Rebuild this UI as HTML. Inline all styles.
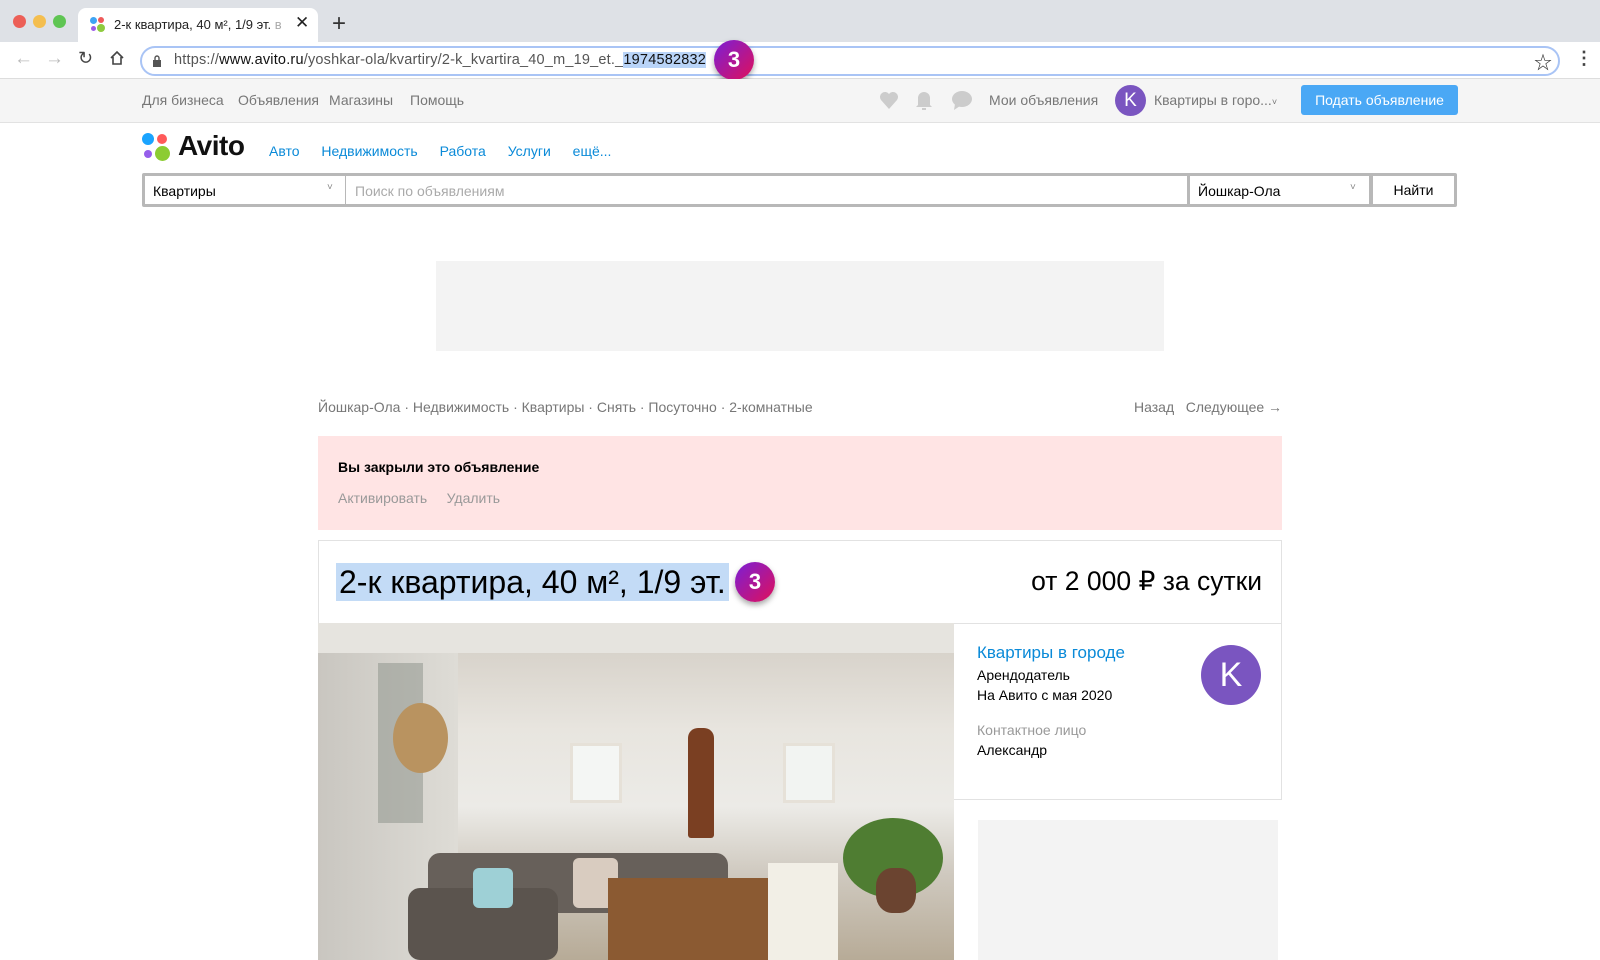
<!DOCTYPE html>
<html><head><meta charset="utf-8"><style>
*{box-sizing:border-box;margin:0;padding:0}
body{width:1600px;height:960px;overflow:hidden;background:#fff;font-family:"Liberation Sans","Noto Sans CJK SC",sans-serif;position:relative;color:#000}
.a{position:absolute}
.dot{position:absolute;border-radius:50%}
.badge{position:absolute;width:40px;height:40px;border-radius:50%;background:linear-gradient(135deg,#7a1fd6,#e0105a);color:#fff;font-weight:bold;font-size:22px;text-align:center;line-height:40px;box-shadow:0 3px 6px rgba(0,0,0,.35)}
.gr{color:#777}
</style></head><body>
<div class="a" style="left:0;top:0;width:1600px;height:42px;background:#dee1e6"></div>
<div class="dot" style="left:13px;top:15px;width:13px;height:13px;background:#ec5f57"></div>
<div class="dot" style="left:33px;top:15px;width:13px;height:13px;background:#f4be4f"></div>
<div class="dot" style="left:53px;top:15px;width:13px;height:13px;background:#5fc553"></div>
<div class="a" style="left:78px;top:8px;width:240px;height:36px;background:#fff;border-radius:8px 8px 0 0"></div>
<div class="dot" style="left:90px;top:17px;width:7px;height:7px;background:#3ea4f4"></div>
<div class="dot" style="left:98px;top:17px;width:6px;height:6px;background:#ef5a5a"></div>
<div class="dot" style="left:91px;top:26px;width:5px;height:5px;background:#9b5ce8"></div>
<div class="dot" style="left:97px;top:24px;width:8px;height:8px;background:#8ecb3e"></div>
<div class="a" style="left:114px;top:17px;font-size:13px;color:#222;white-space:nowrap">2-к квартира, 40 м², 1/9 эт. <span style="color:#aaa">в</span></div>
<div class="a" style="left:295px;top:13px;font-size:17px;color:#222">✕</div>
<div class="a" style="left:332px;top:10px;font-size:24px;color:#333">+</div>
<div class="a" style="left:0;top:42px;width:1600px;height:37px;background:#fff;border-bottom:1px solid #ddd"></div>
<div class="a" style="left:14px;top:48px;font-size:19px;color:#bbb">←</div>
<div class="a" style="left:45px;top:48px;font-size:19px;color:#bbb">→</div>
<div class="a" style="left:78px;top:48px;font-size:18px;color:#444">↻</div>
<svg class="a" style="left:110px;top:51px" width="14" height="14" viewBox="0 0 14 14"><path d="M1 7 L7 1 L13 7 M3 6 V13 H11 V6" fill="none" stroke="#444" stroke-width="1.6"/></svg>
<div class="a" style="left:140px;top:46px;width:1420px;height:30px;border:2px solid #a9c4f5;border-radius:15px"></div>
<svg class="a" style="left:152px;top:55px" width="10" height="12" viewBox="0 0 10 12"><rect x="1" y="5" width="8" height="7" fill="#555"/><path d="M3 5V3a2 2 0 0 1 4 0v2" fill="none" stroke="#555" stroke-width="1.4"/></svg>
<div class="a" style="left:174px;top:52px;font-size:14.5px;color:#555;white-space:nowrap;letter-spacing:0.2px">https://<span style="color:#111">www.avito.ru</span>/yoshkar-ola/kvartiry/2-k_kvartira_40_m_19_et._<span style="background:#b9d4f8;color:#111">1974582832</span></div>
<div class="badge" style="left:714px;top:40px">3</div>
<div class="a" style="left:1534px;top:49px;font-size:18px;color:#333">☆</div>
<div class="a" style="left:1575px;top:48px;font-size:18px;color:#444;font-weight:bold">⋮</div>
<div class="a" style="left:0;top:79px;width:1600px;height:44px;background:#f5f5f5;border-bottom:1px solid #e2e2e2"></div>
<div class="a gr" style="left:142px;top:92px;font-size:14px;white-space:nowrap">Для бизнеса</div>
<div class="a gr" style="left:238px;top:92px;font-size:14px;white-space:nowrap">Объявления</div>
<div class="a gr" style="left:329px;top:92px;font-size:14px;white-space:nowrap">Магазины</div>
<div class="a gr" style="left:410px;top:92px;font-size:14px;white-space:nowrap">Помощь</div>
<svg class="a" style="left:879px;top:91px" width="20" height="18" viewBox="0 0 20 18"><path d="M10 18 L2 9 A5 5 0 0 1 10 3 A5 5 0 0 1 18 9Z" fill="#ccc"/></svg>
<svg class="a" style="left:915px;top:89px" width="18" height="22" viewBox="0 0 18 22"><path d="M3 16 V9 A6 6 0 0 1 15 9 V16 L17 18 H1Z M7 19 H11 V21 H7Z" fill="#ccc"/></svg>
<svg class="a" style="left:951px;top:90px" width="22" height="20" viewBox="0 0 22 20"><ellipse cx="11" cy="9" rx="10" ry="8" fill="#ccc"/><path d="M4 14 L3 20 L9 16Z" fill="#ccc"/></svg>
<div class="a gr" style="left:989px;top:92px;font-size:14px">Мои объявления</div>
<div class="dot" style="left:1115px;top:85px;width:31px;height:31px;background:#7a55c0;color:#fff;font-size:19px;text-align:center;line-height:31px">K</div>
<div class="a gr" style="left:1154px;top:92px;font-size:14px;white-space:nowrap">Квартиры в горо...<span style="font-size:9px">˅</span></div>
<div class="a" style="left:1301px;top:85px;width:157px;height:30px;background:#4aa8f5;border-radius:3px;color:#fff;font-size:14px;text-align:center;line-height:30px">Подать объявление</div>
<div class="dot" style="left:142px;top:133px;width:12px;height:12px;background:#1aa4ff"></div>
<div class="dot" style="left:157px;top:134px;width:10px;height:10px;background:#ff5a5a"></div>
<div class="dot" style="left:144px;top:150px;width:8px;height:8px;background:#965eeb"></div>
<div class="dot" style="left:155px;top:146px;width:15px;height:15px;background:#8ccc32"></div>
<div class="a" style="left:178px;top:130px;font-size:28px;font-weight:bold;color:#111;letter-spacing:-0.5px">Avito</div>
<div class="a" style="left:269px;top:143px;font-size:14px;color:#0a8ad8;word-spacing:18px;white-space:nowrap">Авто <span style="word-spacing:0">Недвижимость</span> Работа Услуги ещё...</div>
<div class="a" style="left:142px;top:173px;width:1315px;height:34px;background:#b8b8b8;border-radius:2px"></div>
<div class="a" style="left:145px;top:176px;width:200px;height:28px;background:#fff;font-size:14px;padding:7px 8px">Квартиры<span class="a" style="left:182px;top:6px;font-size:10px;color:#888">˅</span></div>
<div class="a" style="left:346px;top:176px;width:841px;height:28px;background:#fff;font-size:14px;padding:7px 9px;color:#aaa">Поиск по объявлениям</div>
<div class="a" style="left:1190px;top:176px;width:179px;height:28px;background:#fff;font-size:14px;padding:7px 8px">Йошкар-Ола<span class="a" style="left:160px;top:6px;font-size:10px;color:#888">˅</span></div>
<div class="a" style="left:1373px;top:176px;width:81px;height:28px;background:#fff;font-size:14px;text-align:center;line-height:28px">Найти</div>
<div class="a" style="left:436px;top:261px;width:728px;height:90px;background:#f3f3f3"></div>
<div class="a gr" style="left:318px;top:399px;font-size:14px;white-space:nowrap">Йошкар-Ола · Недвижимость · Квартиры · Снять · Посуточно · 2-комнатные</div>
<div class="a gr" style="left:1134px;top:399px;font-size:14px;white-space:nowrap">Назад&nbsp;&nbsp; Следующее →</div>
<div class="a" style="left:318px;top:436px;width:964px;height:94px;background:#ffe4e4"></div>
<div class="a" style="left:338px;top:459px;font-size:14px;font-weight:bold">Вы закрыли это объявление</div>
<div class="a" style="left:338px;top:490px;font-size:14px;color:#999">Активировать&nbsp;&nbsp;&nbsp;&nbsp; Удалить</div>
<div class="a" style="left:318px;top:540px;width:964px;height:84px;border:1px solid #e2e2e2"></div>
<div class="a" style="left:336px;top:563px;height:38px;background:#c3dbf6;font-size:32px;line-height:38px;padding:0 3px;white-space:nowrap">2-к квартира, 40 м², 1/9 эт.</div>
<div class="badge" style="left:735px;top:562px">3</div>
<div class="a" style="left:1030px;top:566px;width:232px;text-align:right;font-size:26.5px;white-space:nowrap">от 2 000 ₽ за сутки</div>
<div class="a" style="left:318px;top:623px;width:636px;height:337px;overflow:hidden;background:#e8e6e2">
 <div class="a" style="left:0;top:0;width:636px;height:30px;background:#e6e4df"></div>
 <div class="a" style="left:0;top:30px;width:636px;height:307px;background:linear-gradient(180deg,#d8d3cb 0%,#e8e5df 25%,#ecebe7 50%,#cfc9bf 72%,#b7ab97 100%)"></div>
 <div class="a" style="left:0;top:30px;width:140px;height:307px;background:linear-gradient(90deg,#c9c6c0,#dedcd6)"></div>
 <div class="a" style="left:60px;top:40px;width:45px;height:160px;background:#8a8f88;opacity:.5"></div>
 <div class="a" style="left:75px;top:80px;width:55px;height:70px;border-radius:50%;background:#b99360"></div>
 <div class="a" style="left:252px;top:120px;width:52px;height:60px;background:#f4f6f4;border:3px solid #e6e1d8"></div>
 <div class="a" style="left:370px;top:105px;width:26px;height:110px;background:#7a3f22;border-radius:10px 10px 3px 3px"></div>
 <div class="a" style="left:465px;top:120px;width:52px;height:60px;background:#f2f4f2;border:3px solid #e6e1d8"></div>
 <div class="a" style="left:110px;top:230px;width:300px;height:60px;background:#67605a;border-radius:12px"></div>
 <div class="a" style="left:90px;top:265px;width:150px;height:72px;background:#5b544e;border-radius:12px"></div>
 <div class="a" style="left:155px;top:245px;width:40px;height:40px;background:#9ed0d6;border-radius:6px"></div>
 <div class="a" style="left:255px;top:235px;width:45px;height:50px;background:#d9ccc0;border-radius:6px"></div>
 <div class="a" style="left:290px;top:255px;width:160px;height:82px;background:#8b5a32"></div>
 <div class="a" style="left:450px;top:240px;width:70px;height:97px;background:#f2efe6"></div>
 <div class="a" style="left:525px;top:195px;width:100px;height:80px;border-radius:50%;background:#4f7d32"></div>
 <div class="a" style="left:558px;top:245px;width:40px;height:45px;border-radius:40%;background:#6b4430"></div>
</div>
<div class="a" style="left:954px;top:623px;width:328px;height:177px;border:1px solid #e2e2e2;border-left:none;background:#fff"></div>
<div class="a" style="left:977px;top:643px;font-size:17px;color:#0a8ad8">Квартиры в городе</div>
<div class="a" style="left:977px;top:667px;font-size:14px">Арендодатель</div>
<div class="a" style="left:977px;top:687px;font-size:14px">На Авито с мая 2020</div>
<div class="a" style="left:977px;top:722px;font-size:14px;color:#999">Контактное лицо</div>
<div class="a" style="left:977px;top:742px;font-size:14px">Александр</div>
<div class="dot" style="left:1201px;top:645px;width:60px;height:60px;background:#7a55c0;color:#fff;font-size:34px;text-align:center;line-height:60px">K</div>
<div class="a" style="left:978px;top:820px;width:300px;height:140px;background:#f3f3f3"></div>
</body></html>
